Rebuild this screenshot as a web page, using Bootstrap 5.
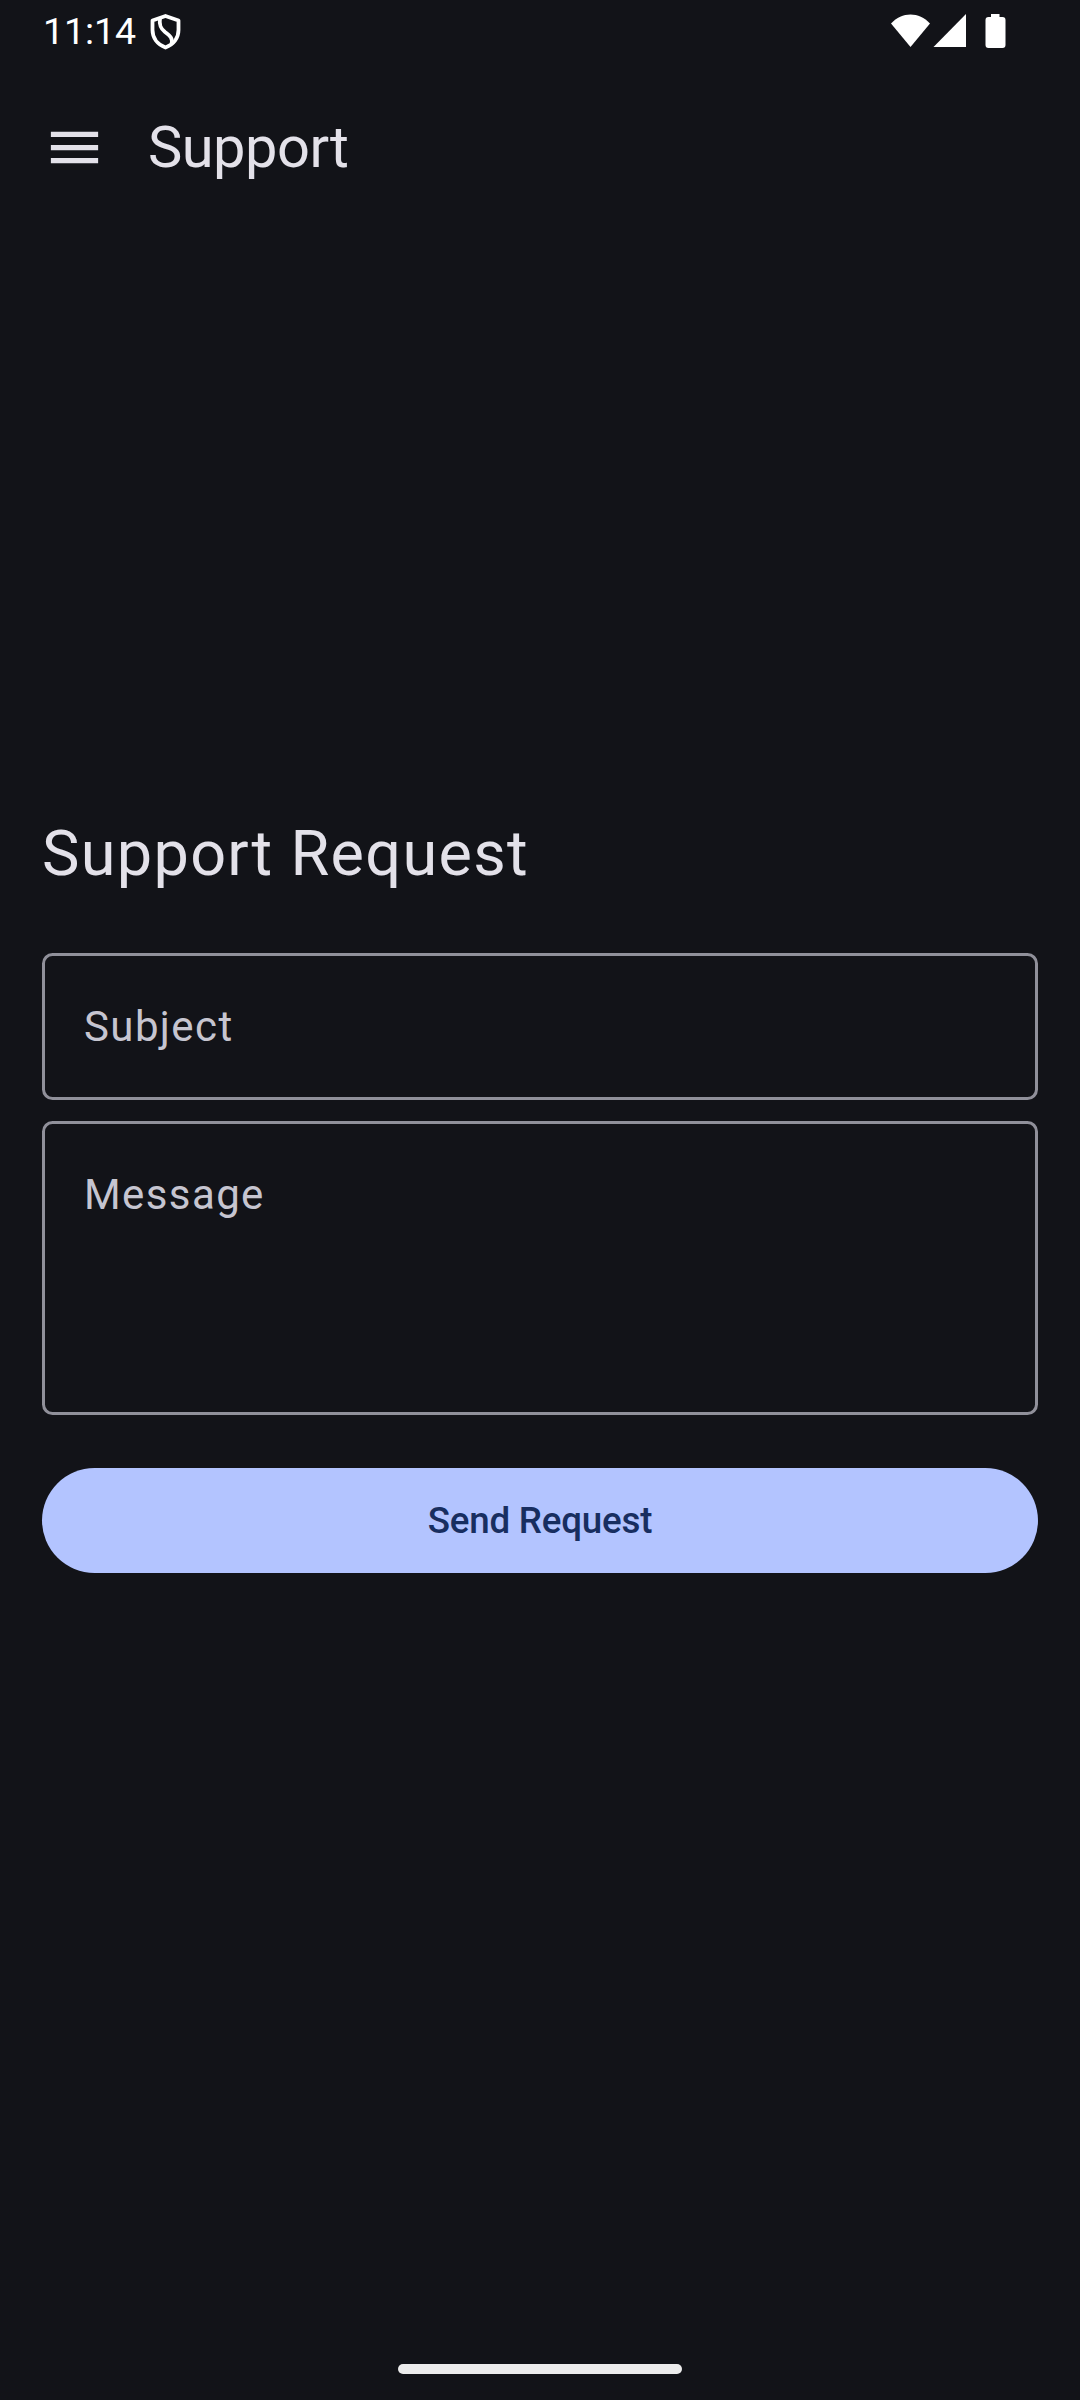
<!DOCTYPE html>
<html lang="en" data-bs-theme="dark">
<head>
<meta charset="utf-8">
<meta name="viewport" content="width=device-width, initial-scale=1">
<title>Support</title>
<link href="https://cdn.jsdelivr.net/npm/bootstrap@5.3.0/dist/css/bootstrap.min.css" rel="stylesheet">
<style>
body{background:#121318;color:#e3e1e9;font-family:Roboto,"Noto Sans",sans-serif;height:2400px;overflow:hidden}
.status-bar{height:63px;padding:0 74px 0 43px;color:#fff}
.clock{font-size:37.5px;line-height:61px;letter-spacing:-.1px;width:107px}
.app-bar{height:168px;padding:0 43px}
.menu-btn{width:63px;height:63px;line-height:0}
.app-title{font-size:57.75px;line-height:74px;font-weight:400;letter-spacing:-.5px;margin-left:42px;color:#e3e1e9}
.content-area{padding:585px 42px 0}
.form-title{font-size:63px;line-height:84px;font-weight:400;letter-spacing:1.31px;margin:-4px 0 57px;color:#e3e1e9}
.form-floating>.field{height:147px;min-height:147px;padding:0 42px;border:3px solid #90909a;border-radius:10.5px;background:transparent;color:#e3e1e9;font-size:42px;resize:none;box-shadow:none}
.form-floating>.field.field-tall{height:294px}
.form-floating>.field~label{height:147px;padding:0 42px;font-size:42px;line-height:147px;letter-spacing:1.4px;color:#c6c5d0;opacity:1;border:0;transform:none}
.form-floating>.field~label::after{display:none}
.field-gap{margin-top:21px}
.send-btn{height:105px;background:#b3c4ff;color:#182e60;font-size:36.75px;font-weight:500;line-height:105px;letter-spacing:-.2px;padding:0;border:0;margin-top:53px}
.home-pill{width:284px;height:10px;background:#ececec;margin-bottom:26px}
</style>
<script src="https://cdn.jsdelivr.net/npm/bootstrap@5.3.0/dist/js/bootstrap.bundle.min.js"></script>
</head>
<body class="d-flex flex-column">
<header class="status-bar d-flex align-items-center justify-content-between">
  <div class="d-flex align-items-center">
    <span class="clock">11:14</span>
    <svg width="31" height="36" viewBox="0 0 30 36" fill="none" stroke="#fff" stroke-width="3.8" stroke-linejoin="round"><path d="M15 2 2 6.500V16c0 8 5 14.500 13 17.500 8-3 13-9.500 13-17.500V6.500z"/><path d="M9.500 4C8.500 11 10 14.500 14.500 18c5.500 4 8 6.500 6.500 12"/></svg>
  </div>
  <svg width="115" height="36" viewBox="0 0 115 36" fill="#fff"><path d="M0 9.500C11-2.500 28-2.500 39 9.500L19.500 33z"/><path d="M42.500 33 75 0V33z"/><path d="M100 0h8.500v3h3a3 3 0 0 1 3 3v25a3 3 0 0 1-3 3h-14a3 3 0 0 1-3-3V6a3 3 0 0 1 3-3h2.500z"/></svg>
</header>
<nav class="app-bar d-flex align-items-center">
  <button type="button" class="menu-btn btn p-0 border-0" aria-label="Menu"><svg width="63" height="63" viewBox="0 0 24 24" fill="#e3e1e9"><path d="M3 18h18v-2H3v2zm0-5h18v-2H3v2zm0-7v2h18V6H3z"/></svg></button>
  <h1 class="app-title mb-0">Support</h1>
</nav>
<main class="content-area flex-grow-1">
  <h2 class="form-title">Support Request</h2>
  <form>
    <div class="form-floating">
      <input type="text" class="form-control field" id="subject" placeholder=" ">
      <label for="subject">Subject</label>
    </div>
    <div class="form-floating field-gap">
      <textarea class="form-control field field-tall" id="message" placeholder=" "></textarea>
      <label for="message">Message</label>
    </div>
    <button type="button" class="send-btn btn rounded-pill w-100">Send Request</button>
  </form>
</main>
<div class="home-pill rounded-pill mx-auto"></div>
</body>
</html>
